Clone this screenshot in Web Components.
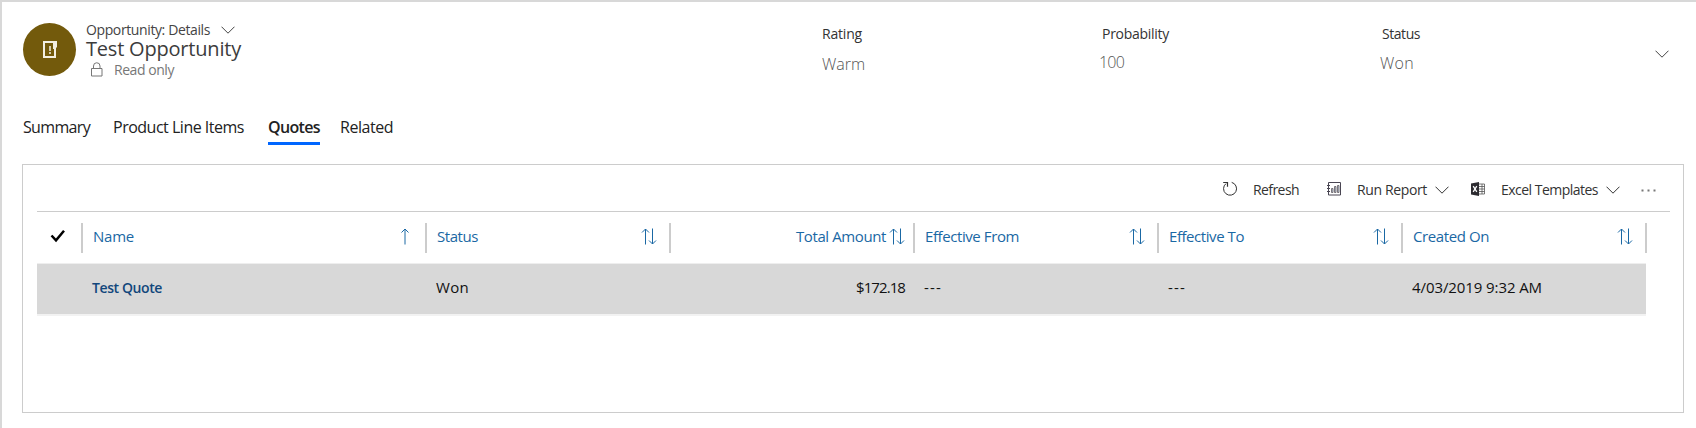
<!DOCTYPE html>
<html lang="en"><head><meta charset="utf-8"><title>Test Opportunity</title>
<style>html,body{margin:0;height:100%;overflow:hidden;background:#fff}body{font-family:"Open Sans","Noto Sans",sans-serif}</style></head>
<body><opportunity-page></opportunity-page>
<script>
const define=(name,html,ready)=>customElements.define(name,class extends HTMLElement{
  connectedCallback(){
    if(this.shadowRoot)return;
    const t=document.createElement('template');t.innerHTML=html;
    this.attachShadow({mode:'open'}).append(t.content.cloneNode(true));
    if(ready)ready(this,this.shadowRoot);
  }
});
define('ui-text',`<style>:host{display:block;flex:none;white-space:nowrap;line-height:20px;font-size:14px}span{display:inline-block}</style><span><slot></slot></span>`,(el,root)=>{
  const s=root.querySelector('span'),w=+el.getAttribute('w');
  if(el.hasAttribute('size'))el.style.fontSize=el.getAttribute('size')+'px';
  if(w){
    el.style.width=w+'px';
    const n=s.getBoundingClientRect().width;
    s.style.letterSpacing=((w-n)/el.textContent.length).toFixed(3)+'px';
  }
});
const icons={
 chevron:[14,8,'<path d="M.5.7 7 7.2 13.5.7" fill="none" stroke="currentColor"/>'],
 lock:[12,15,'<path d="M.5 6.5h10.500v7.500H.5zM2.500 6.500V4a3.250 3.250 0 0 1 6.500 0v2.500" fill="none" stroke="currentColor"/>'],
 entity:[14,18,'<path d="M1 1h11v15H1z" fill="none" stroke="#f3efe2" stroke-width="2"/><path d="M10 0h4v6.500h-2V8h-2z" fill="#f3efe2"/><path d="M7 5v5M7 11v2" stroke="#f3efe2" stroke-width="1.500"/>'],
 refresh:[16,16,'<path d="M9.700 1.400A6.500 6.500 0 1 1 4 2.600" fill="none" stroke="currentColor"/><path d="M1.200 1.500h4.300v4.300" fill="none" stroke="currentColor" stroke-width="1.200"/>'],
 report:[14,14,'<path d="M1.500.5h12v12.500h-12z" fill="none" stroke="#494552"/><path d="M0 3.500h3M0 6.500h3M0 9.500h3" stroke="#494552"/><path d="M4.500 6.500h1.500v4H4.500zM7.500 4.500H9v6H7.500zM10.500 3.500H12v7h-1.500z" fill="#b5c5d8" stroke="#625a60" stroke-width=".8"/>'],
 excel:[14,14,'<path d="M8 2h5.500v10H8M8 4.500h5.500M8 7h5.500M8 9.500h5.500M11 2v10" fill="none" stroke="#555" stroke-width=".8"/><path d="M0 1.500 8 0v14L0 12.500z" fill="#2c2b30"/><path d="m2.200 4.200 3.600 5.600M5.800 4.200 2.200 9.800" stroke="#fff" stroke-width="1.300"/>'],
 more:[15,3,'<path d="M.5.5h2v2h-2zM6.500.5h2v2h-2zM12.500.5h2v2h-2z" fill="#777"/>'],
 check:[16,14,'<path d="m1.500 6.500 4.500 4.800L14 1.800" fill="none" stroke="#000" stroke-width="2.500"/>'],
 up:[8,17,'<path d="M4 16.500V1M.5 4.500 4 1l3.500 3.500" fill="none" stroke="currentColor"/>'],
 sort:[16,17,'<path d="M4.500 16.500V1M1 4.500 4.500 1 8 4.500M11.500.5V16M8 12.500 11.500 16 15 12.500" fill="none" stroke="currentColor"/>']
};
define('ui-icon','<style>:host{display:block;flex:none}svg{display:block}</style>',(el,root)=>{
  const [w,h,p]=icons[el.getAttribute('name')],t=document.createElement('template');
  t.innerHTML=`<svg width="${w}" height="${h}" viewBox="0 0 ${w} ${h}">${p}</svg>`;
  root.append(t.content);
});
define('record-field',`<style>:host{display:block;color:#333}::slotted([slot=value]){color:#555;font-weight:300}</style><slot></slot><slot name="value"></slot>`);
define('record-header',`<style>
:host{display:flex;height:102px;box-sizing:border-box;padding:21px 27px 0 21px;color:#444}
.av{width:53px;height:53px;border-radius:50%;background:#735a0c;display:grid;place-items:center;flex:none}
.t{width:746px;padding-left:10px;box-sizing:border-box;flex:none}
.a,.r{display:flex}.a{height:16px;margin-top:-1px}.a ui-icon{margin:4px 0 0 11px}.a ui-text,.r ui-text{line-height:16px}
.n{height:22px}.n ui-text{line-height:22px;color:#3c3c3c}
.r{color:#777;margin-top:2px}.r ui-icon{margin:0 11px 0 5px}
.f{display:grid;grid-template-columns:280px 280px 200px;flex:none}
.f record-field{padding-top:1px}.end{margin:27px 0 0 auto;color:#444}
</style><div class="av"><ui-icon name="entity"></ui-icon></div>
<div class="t"><div class="a"><ui-text w="124">Opportunity: Details</ui-text><ui-icon name="chevron"></ui-icon></div>
<div class="n"><ui-text size="20" w="155">Test Opportunity</ui-text></div>
<div class="r"><ui-icon name="lock"></ui-icon><ui-text w="60">Read only</ui-text></div></div>
<div class="f"><record-field><ui-text w="40">Rating</ui-text><ui-text slot="value" size="16" w="43" style="margin:10px 0 0 0">Warm</ui-text></record-field>
<record-field><ui-text w="67">Probability</ui-text><ui-text slot="value" size="16" w="25" style="margin:8px 0 0 -3px">100</ui-text></record-field>
<record-field><ui-text w="38">Status</ui-text><ui-text slot="value" size="16" w="34" style="margin:9px 0 0 -2px">Won</ui-text></record-field></div>
<ui-icon class="end" name="chevron"></ui-icon>`);
define('record-tab',`<style>:host{display:block;height:28px;color:#222}:host([selected]){font-weight:600;border-bottom:3px solid #06f;height:25px}</style><slot></slot>`);
define('record-tabs',`<style>:host{display:flex;padding:13px 0 0 21px;height:47px;align-items:flex-start}</style>
<record-tab style="margin-right:23px"><ui-text size="16" w="67">Summary</ui-text></record-tab>
<record-tab style="margin-right:24px"><ui-text size="16" w="131">Product Line Items</ui-text></record-tab>
<record-tab selected style="margin-right:20px"><ui-text size="16" w="52">Quotes</ui-text></record-tab>
<record-tab><ui-text size="16" w="53">Related</ui-text></record-tab>`);
define('command-bar',`<style>:host{display:flex;height:46px;align-items:center;margin:0 13px 0 14px;padding-right:14px;justify-content:flex-end;border-bottom:1px solid #ccc;color:#333}ui-text{margin-top:4px}</style>
<ui-icon name="refresh" style="margin:2px 15px 0 0"></ui-icon><ui-text w="46">Refresh</ui-text>
<ui-icon name="report" style="margin:1px 16px 0 28px"></ui-icon><ui-text w="70">Run Report</ui-text><ui-icon name="chevron" style="margin:4px 22px 0 8px"></ui-icon>
<ui-icon name="excel" style="margin:1px 16px 0 0"></ui-icon><ui-text w="97">Excel Templates</ui-text><ui-icon name="chevron" style="margin:4px 21px 0 8px"></ui-icon>
<ui-icon name="more" style="margin-top:4px"></ui-icon>`);
define('grid-head',`<style>:host{display:flex;height:30px;box-sizing:border-box;border-right:2px solid #ccc;justify-content:space-between;padding:3px 9px 0 10px;color:#1a68a4}:host([end]){justify-content:flex-end;padding-right:8px}:host([end]) ::slotted(ui-icon){margin-left:3px}::slotted(ui-icon){margin-top:2px}</style><slot></slot>`);
define('grid-cell',`<style>:host{display:flex;height:50px;box-sizing:border-box;padding:13px 10px 0 9px;color:#111}:host([end]){justify-content:flex-end}:host([link]){padding-top:14px;color:#12477c;font-weight:600}</style><slot></slot>`);
define('quote-grid',`<style>
:host{display:block;margin-left:14px;width:1610px}
.g{display:grid;grid-template-columns:46px 344px repeat(5,244px);width:1610px}
.h{padding:11px 0 10px}.c{padding:6px 0 0 13px;height:30px;box-sizing:border-box;border-right:2px solid #ccc}
.r{background:#d8d8d8;border-top:1px solid #eee;border-bottom:2px solid #f2f2f2;width:1609px;overflow:hidden}
</style>
<div class="g h"><div class="c"><ui-icon name="check"></ui-icon></div>
<grid-head><ui-text size="15" w="41">Name</ui-text><ui-icon name="up" style="margin-right:7px"></ui-icon></grid-head>
<grid-head><ui-text size="15" w="41">Status</ui-text><ui-icon name="sort" style="margin-right:3px"></ui-icon></grid-head>
<grid-head end><ui-text size="15" w="90">Total Amount</ui-text><ui-icon name="sort"></ui-icon></grid-head>
<grid-head><ui-text size="15" w="94">Effective From</ui-text><ui-icon name="sort" style="margin-right:3px"></ui-icon></grid-head>
<grid-head><ui-text size="15" w="75">Effective To</ui-text><ui-icon name="sort" style="margin-right:3px"></ui-icon></grid-head>
<grid-head><ui-text size="15" w="76">Created On</ui-text><ui-icon name="sort" style="margin-right:3px"></ui-icon></grid-head></div>
<div class="g r"><span></span><grid-cell link><ui-text w="70">Test Quote</ui-text></grid-cell>
<grid-cell><ui-text size="15" w="33">Won</ui-text></grid-cell><grid-cell end><ui-text size="15" w="49">$172.18</ui-text></grid-cell>
<grid-cell><ui-text size="15" w="18">---</ui-text></grid-cell><grid-cell><ui-text size="15" w="18">---</ui-text></grid-cell><grid-cell><ui-text size="15" w="130">4/03/2019 9:32 AM</ui-text></grid-cell></div>`);
define('opportunity-page',`<style>:host{display:block;height:428px;box-sizing:border-box;border-top:2px solid #d8d8d8;border-left:2px solid #d8d8d8;background:#fff;overflow:hidden}
.p{margin:0 12px 0 20px;height:247px;border:1px solid #ccc}</style>
<record-header></record-header><record-tabs></record-tabs><div class="p"><command-bar></command-bar><quote-grid></quote-grid></div>`);
</script></body></html>
